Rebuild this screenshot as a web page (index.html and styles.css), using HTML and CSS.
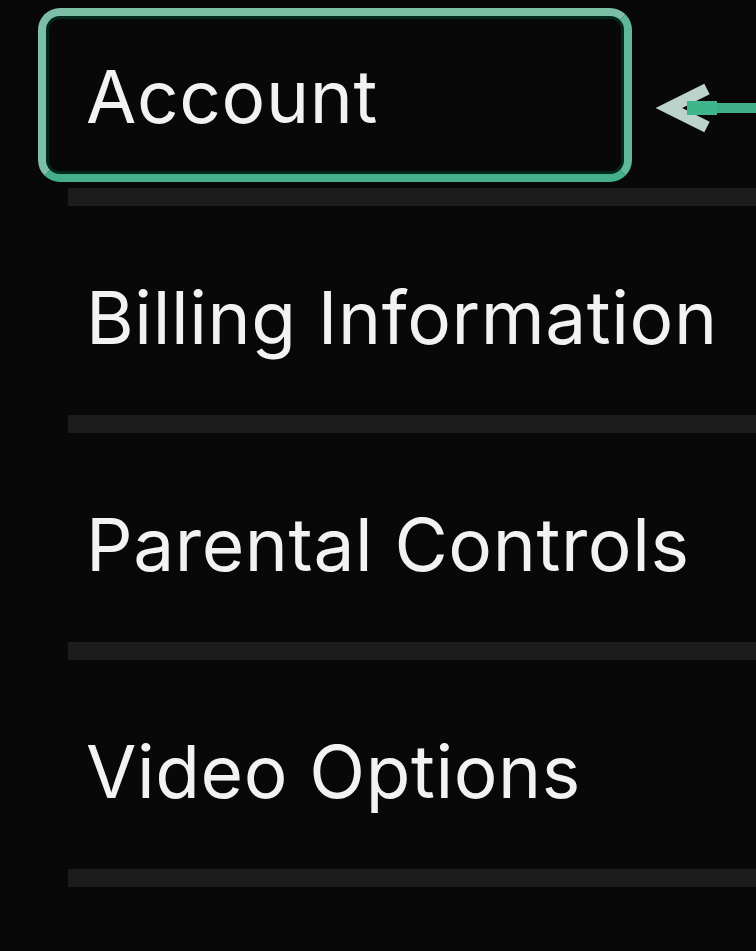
FILE: index.html
```html
<!DOCTYPE html>
<html>
<head>
<meta charset="utf-8">
<link rel="stylesheet" href="styles.css">
</head>
<body>
<nav class="menu">
  <div class="item active">
    <div class="focus"><span class="label">Account</span></div>
    <svg class="arrow" width="101" height="56" viewBox="0 0 101 56">
      <path d="M34 28 H101" stroke="#3fae88" stroke-width="10" fill="none"/>
      <path d="M52 9 L14 28 L52 47" stroke="#bcd3c9" stroke-width="12" fill="none" stroke-linejoin="miter"/>
      <path d="M32 28 H62" stroke="#3fb58c" stroke-width="14" fill="none"/>
    </svg>
  </div>
  <div class="divider first"></div>
  <div class="item"><span class="label">Billing Information</span></div>
  <div class="divider"></div>
  <div class="item"><span class="label">Parental Controls</span></div>
  <div class="divider"></div>
  <div class="item"><span class="label">Video Options</span></div>
  <div class="divider"></div>
</nav>
</body>
</html>
```
FILE: styles.css
```css
html, body {
  margin: 0;
  padding: 0;
  background: #080808;
}
body {
  width: 756px;
  height: 951px;
  overflow: hidden;
  font-family: "Inter", "Liberation Sans", sans-serif;
  color: #f2f2f2;
}
.menu {
  display: flex;
  flex-direction: column;
  padding-top: 8px;
}
.item {
  position: relative;
  height: 209px;
  box-sizing: border-box;
  display: flex;
  align-items: center;
  padding-left: 86px;
  padding-top: 14px;
}
.item.active {
  padding-left: 38px;
  padding-top: 0;
  height: 174px;
}
.focus {
  width: 594px;
  height: 174px;
  box-sizing: border-box;
  border: 8px solid #7cbea6;
  border-bottom-color: #44b08a;
  border-right-color: #5fb898;
  border-radius: 22px;
  display: flex;
  align-items: center;
  padding-left: 40px;
  padding-top: 2px;
  box-shadow: inset 0 0 0 3px #022a1c;
}
.label {
  font-size: 73px;
  font-weight: 400;
  letter-spacing: 0.6px;
  line-height: 1;
  white-space: nowrap;
}
.arrow {
  position: absolute;
  left: 655px;
  top: 72px;
}
.divider {
  height: 18px;
  margin-left: 68px;
  background: #1c1c1c;
}
.divider.first {
  margin-top: 6px;
}
```
